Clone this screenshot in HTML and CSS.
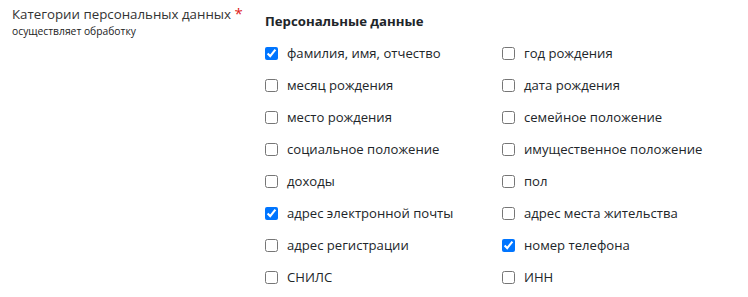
FILE: index.html
```html
<!DOCTYPE html>
<html lang="ru">

<head>
    <meta charset="UTF-8">
    <meta name="viewport" content="width=device-width, initial-scale=1.0">
    <title>Категории персональных данных</title>
    <link rel="stylesheet" href="styles.css">
</head>

<body>
    <div class="field">
        <div class="field__label">
            <div class="field__title">Категории персональных данных <span class="required">*</span></div>
            <div class="field__hint">осуществляет обработку</div>
        </div>
        <div class="field__body">
            <h4 class="group__title">Персональные данные</h4>
            <div class="checks">
                <label class="check"><input type="checkbox" checked><span>фамилия, имя, отчество</span></label>
                <label class="check"><input type="checkbox"><span>год рождения</span></label>
                <label class="check"><input type="checkbox"><span>месяц рождения</span></label>
                <label class="check"><input type="checkbox"><span>дата рождения</span></label>
                <label class="check"><input type="checkbox"><span>место рождения</span></label>
                <label class="check"><input type="checkbox"><span>семейное положение</span></label>
                <label class="check"><input type="checkbox"><span>социальное положение</span></label>
                <label class="check"><input type="checkbox"><span>имущественное положение</span></label>
                <label class="check"><input type="checkbox"><span>доходы</span></label>
                <label class="check"><input type="checkbox"><span>пол</span></label>
                <label class="check"><input type="checkbox" checked><span>адрес электронной почты</span></label>
                <label class="check"><input type="checkbox"><span>адрес места жительства</span></label>
                <label class="check"><input type="checkbox"><span>адрес регистрации</span></label>
                <label class="check"><input type="checkbox" checked><span>номер телефона</span></label>
                <label class="check"><input type="checkbox"><span>СНИЛС</span></label>
                <label class="check"><input type="checkbox"><span>ИНН</span></label>
            </div>
        </div>
    </div>
</body>

</html>
```

FILE: styles.css
```css
* {
    margin: 0;
    padding: 0;
    box-sizing: border-box;
}

body {
    font-family: "Open Sans", "Noto Sans", sans-serif;
    color: #212529;
    background: #fff;
}

.field {
    display: flex;
    padding-top: 4px;
}

.field__label {
    width: 265px;
    padding-left: 12px;
}

.field__title {
    font-size: 13.3px;
    line-height: 18px;
    color: #333;
}

.required {
    color: #e0201b;
    font-size: 15px;
}

.field__hint {
    font-size: 10.3px;
    line-height: 16px;
    color: #222;
}

.field__body {
    flex: 1;
}

.group__title {
    font-size: 13.2px;
    font-weight: 700;
    line-height: 18px;
    margin-top: 8px;
    margin-bottom: 14px;
}

.checks {
    display: grid;
    grid-template-columns: 237px 1fr;
    row-gap: 14px;
}

.check {
    display: flex;
    align-items: center;
    height: 18px;
    font-size: 13.1px;
    color: #212529;
}

.check input {
    width: 13px;
    height: 13px;
    margin: 0 9px 0 0;
    accent-color: #0075ff;
}
```
